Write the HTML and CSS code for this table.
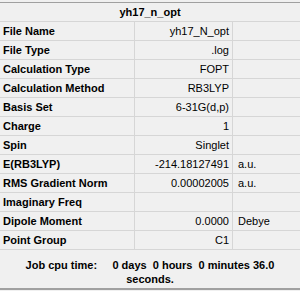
FILE: index.html
```html
<!DOCTYPE html>
<html lang="en">
<head>
    <meta charset="UTF-8">
    <title>yh17_n_opt</title>
    <link rel="stylesheet" href="styles.css">
</head>
<body>
    <div class="panel">
        <div class="title">yh17_n_opt</div>
        <table class="summary">
            <tr><th>File Name</th><td class="val">yh17_N_opt</td><td class="unit"></td></tr>
            <tr><th>File Type</th><td class="val">.log</td><td class="unit"></td></tr>
            <tr><th>Calculation Type</th><td class="val">FOPT</td><td class="unit"></td></tr>
            <tr><th>Calculation Method</th><td class="val">RB3LYP</td><td class="unit"></td></tr>
            <tr><th>Basis Set</th><td class="val">6-31G(d,p)</td><td class="unit"></td></tr>
            <tr><th>Charge</th><td class="val">1</td><td class="unit"></td></tr>
            <tr><th>Spin</th><td class="val">Singlet</td><td class="unit"></td></tr>
            <tr><th>E(RB3LYP)</th><td class="val">-214.18127491</td><td class="unit">a.u.</td></tr>
            <tr><th>RMS Gradient Norm</th><td class="val">0.00002005</td><td class="unit">a.u.</td></tr>
            <tr><th>Imaginary Freq</th><td class="val"></td><td class="unit"></td></tr>
            <tr><th>Dipole Moment</th><td class="val">0.0000</td><td class="unit">Debye</td></tr>
            <tr><th>Point Group</th><td class="val">C1</td><td class="unit"></td></tr>
        </table>
        <div class="cpu">
            <b>Job cpu time:</b>&nbsp;&nbsp;&nbsp;&nbsp; <b>0 days&nbsp; 0 hours&nbsp; 0 minutes 36.0 seconds.</b>
        </div>
    </div>
</body>
</html>
```

FILE: styles.css
```css
body {
    margin: 0;
    background-color: #f0f0f0;
    font-family: 'Liberation Sans', Arial, sans-serif;
    font-size: 11px;
    color: #000;
}

.panel {
    margin-top: 2px;
    border-top: 1px solid #a0a0a0;
    border-bottom: 2px solid #a0a0a0;
    height: 288px;
    box-sizing: border-box;
}

.title {
    height: 18px;
    line-height: 18px;
    text-align: center;
    font-weight: bold;
    border-bottom: 1px solid #d6d6d6;
}

.summary {
    width: 300px;
    border-collapse: collapse;
    table-layout: fixed;
}

.summary th,
.summary td {
    height: 18px;
    padding: 0 3px;
    border-bottom: 1px solid #d6d6d6;
    white-space: nowrap;
}

.summary th {
    width: 128px;
    text-align: left;
    font-weight: bold;
    border-right: 1px solid #d6d6d6;
}

.summary td.val {
    width: 91px;
    text-align: right;
    border-right: 1px solid #d6d6d6;
}

.summary td.unit {
    padding-left: 5px;
}

.cpu {
    padding: 8px 14px 0;
    text-align: center;
    line-height: 14px;
}
```
